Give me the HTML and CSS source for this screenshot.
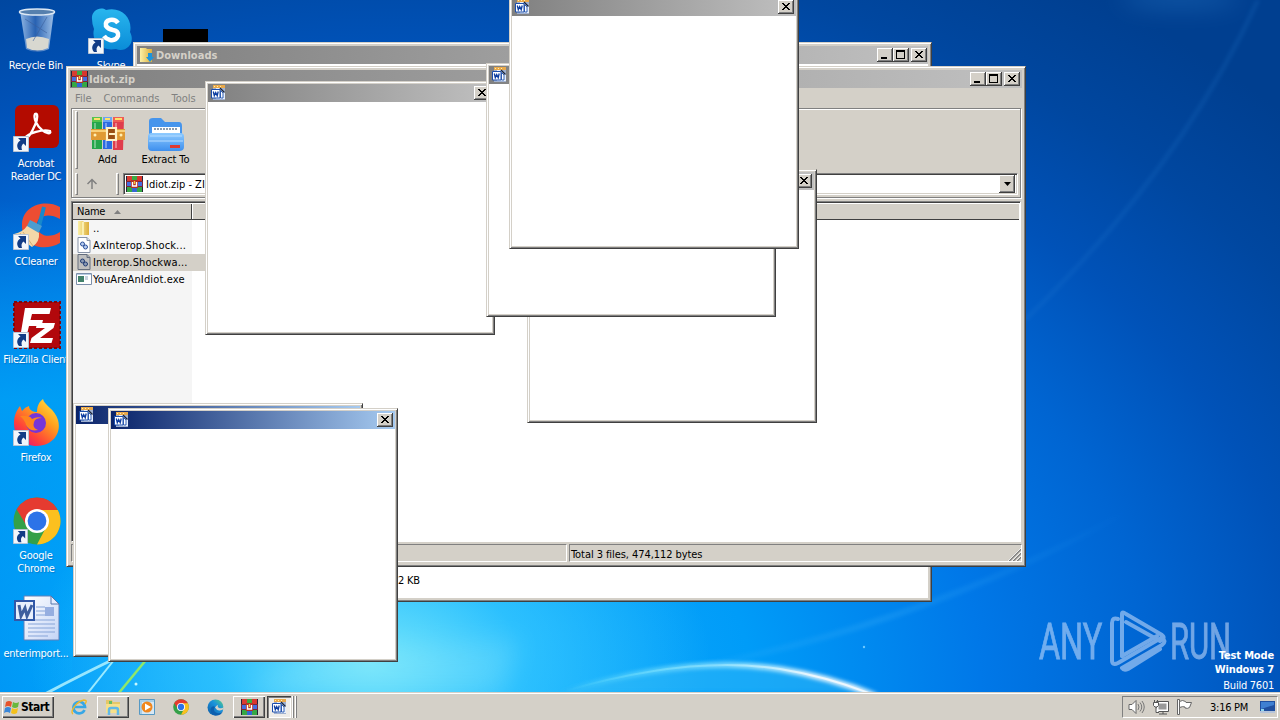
FILE: index.html
```html
<!DOCTYPE html>
<html lang="en">
<head>
<meta charset="utf-8">
<title>Desktop</title>
<link rel="stylesheet" href="styles.css">
</head>
<body>
<svg class="defs" width="0" height="0" aria-hidden="true">
  <defs>
    <linearGradient id="gFolder" x1="0" y1="0" x2="0" y2="1"><stop offset="0" stop-color="#8fcbff"/><stop offset="1" stop-color="#3d8fee"/></linearGradient>
    <linearGradient id="gYellow" x1="0" y1="0" x2="1" y2="0"><stop offset="0" stop-color="#fbf0a6"/><stop offset="1" stop-color="#dcae3c"/></linearGradient>
    <linearGradient id="gFox" x1="1" y1="0" x2="0.2" y2="1"><stop offset="0" stop-color="#fff04a"/><stop offset=".4" stop-color="#ffa11e"/><stop offset=".75" stop-color="#ff4438"/><stop offset="1" stop-color="#e2127c"/></linearGradient>
    <linearGradient id="gEdge" x1="0" y1="1" x2="1" y2="0"><stop offset="0" stop-color="#0c59a4"/><stop offset=".6" stop-color="#1b93dc"/><stop offset="1" stop-color="#5ad27a"/></linearGradient>
    <linearGradient id="gBin" x1="0" y1="0" x2="1" y2="0"><stop offset="0" stop-color="#a9c9ee"/><stop offset=".45" stop-color="#2f66b4"/><stop offset="1" stop-color="#b9d4f2"/></linearGradient>
    <linearGradient id="gSky" x1="0" y1="0" x2="0" y2="1"><stop offset="0" stop-color="#29b6ee"/><stop offset="1" stop-color="#0a8cd8"/></linearGradient>
    <linearGradient id="gDoc" x1="0" y1="0" x2="1" y2="1"><stop offset="0" stop-color="#fff"/><stop offset="1" stop-color="#c4d4f6"/></linearGradient>
    <symbol id="x" viewBox="0 0 16 14"><path d="M4 3h2v1h1v1h2V4h1V3h2v1h-1v1h-1v1H9v1h1v1h1v1h1v1h-2V9H9V8H7v1H6v1H4V9h1V8h1V7h1V6H6V5H5V4H4z"/></symbol>
    <symbol id="max" viewBox="0 0 16 14"><path fill-rule="evenodd" d="M3 2h9v9H3zM4 4v6h7V4z"/></symbol>
    <symbol id="min" viewBox="0 0 16 14"><path d="M4 9h6v2H4z"/></symbol>
    <symbol id="word" viewBox="0 0 16 16">
      <path d="M3 0h12v15H3z" fill="#9fb0cf"/><path d="M3 0h12v3H3z" fill="#e9a94a"/><path d="M4 1h1v1H4zM7 1h1v1H7zM10 1h1v1h-1z" fill="#fff0b0"/>
      <path d="M6 3h5l4 4v7H6z" fill="#e5eefc"/><path d="M10 3l4.500 4.500" stroke="#14233f" stroke-width="1.500"/>
      <path d="M1.500 4.500h8.500v8.500H1.500z" fill="#fff" stroke="#1c4eab"/><path d="M3.300 6.500l1 4.200L5.700 7.500 7.200 10.700l1-4.200" fill="none" stroke="#0b3ca0" stroke-width="1.300"/><path d="M10.500 5.500v7.500h2.500V8z" fill="#fff" stroke="#1c4eab" stroke-width=".9"/>
    </symbol>
    <symbol id="rar" viewBox="0 0 17 16">
      <path d="M0 0h17v16H0z" fill="#252538"/><path d="M1 0h5v5H1z" fill="#d83c32"/><path d="M6 0h5v5H6z" fill="#3aab43"/><path d="M11 0h5v5h-5z" fill="#d9362e"/>
      <path d="M1 11h5v5H1z" fill="#36a845"/><path d="M6 11h5v5H6z" fill="#3567d2"/><path d="M11 11h5v5h-5z" fill="#36a845"/>
      <path d="M0 5h17v6H0z" fill="#7c2736"/><path d="M1 6h4v4H1zM12 6h4v4h-4z" fill="#456de0"/><path d="M5 4h7v8H5z" fill="#b73124"/><path d="M6.500 6v4h4V6" fill="none" stroke="#fff" stroke-width="1.400"/><path d="M8.500 5v3" stroke="#f9cc3c" stroke-width="1.300"/>
    </symbol>
    <symbol id="cut" viewBox="0 0 16 16"><path d="M.5.5h15v15H.5z" fill="#f2f6fb" stroke="#b9c4d4"/><path d="M5 2h8v8l-2.500-2.500C8.500 9 8 11 9 14H6C3 10.500 4 6.500 7.500 4.500z" fill="#123c86"/></symbol>
    <symbol id="chrome" viewBox="0 0 48 48">
      <circle cx="24" cy="24" r="23.500" fill="#34a048"/><path d="M24 24L3.600 12.300A23.500 23.500 0 0 1 44.400 12.300z" fill="#e53b30"/><path d="M24 13h20.800A23.500 23.500 0 0 1 24 47.500l9.500-18z" fill="#fbc01f"/><path d="M3.600 12.300L14 29.500 24 24V12z" fill="#e53b30"/>
      <circle cx="24" cy="24" r="12" fill="#fff"/><circle cx="24" cy="24" r="9.400" fill="#2c73e8"/>
    </symbol>
    <symbol id="dll" viewBox="0 0 15 16"><path d="M1.500.5h9l3 3v12h-12z" fill="#fff" stroke="#8793a7"/><path d="M10.500.5v3h3" fill="#dbe3ee" stroke="#8793a7"/><circle cx="6" cy="7" r="2" fill="#b8cdf0" stroke="#2b4f99"/><circle cx="9" cy="10" r="2" fill="#b8cdf0" stroke="#2b4f99"/></symbol>
    <symbol id="resize" viewBox="0 0 13 13"><path d="M1 13L13 1M5 13l8-8M9 13l4-4" stroke="#808080" stroke-width="1.700"/><path d="M0 13L13 0M4 13l9-9M8 13l5-5" stroke="#fff" stroke-width=".8"/></symbol>
  </defs>
</svg>

<main class="desktop">
  <svg class="wallpaper" width="1280" height="692" viewBox="0 0 1280 692">
    <defs>
      <filter id="soft" x="-10%" y="-30%" width="120%" height="160%"><feGaussianBlur stdDeviation="2"/></filter>
      <filter id="wide" x="-50%" y="-200%" width="200%" height="500%"><feGaussianBlur stdDeviation="12"/></filter>
      <linearGradient id="arc" gradientUnits="userSpaceOnUse" x1="565" y1="0" x2="876" y2="0"><stop offset="0" stop-color="#9ff" stop-opacity="0"/><stop offset=".5" stop-color="#a6ecff" stop-opacity=".8"/><stop offset=".8" stop-color="#fff"/><stop offset="1" stop-color="#fff"/></linearGradient>
      <linearGradient id="ray" gradientUnits="userSpaceOnUse" x1="620" y1="0" x2="1130" y2="0"><stop offset="0" stop-color="#4dbcff" stop-opacity="0"/><stop offset=".5" stop-color="#3aaef8"/><stop offset="1" stop-color="#3aaef8" stop-opacity="0"/></linearGradient>
    </defs>
    <path d="M560 692Q690 650 780 668Q840 678 875 692z" fill="#39bdf8" opacity=".45" filter="url(#soft)"/>
    <path d="M565 691Q690 655 780 669Q830 677 876 696" fill="none" stroke="url(#arc)" stroke-width="5" filter="url(#soft)"/>
    <path d="M565 691Q690 655 780 669Q830 677 876 696" fill="none" stroke="url(#arc)" stroke-width="2" opacity=".7"/>
    <path d="M620 680Q900 640 1130 510" fill="none" stroke="url(#ray)" stroke-width="6" opacity=".3" filter="url(#soft)"/>
    <ellipse cx="1180" cy="-2" rx="60" ry="10" fill="#48a0e8" opacity=".25" filter="url(#wide)"/>
    <path d="M1258 0Q1180 170 1025 320" fill="none" stroke="#2c83d6" stroke-width="3" opacity=".25" filter="url(#soft)"/>
    <path d="M45 694Q75 678 112 660" fill="none" stroke="#bcf6ff" stroke-width="3" opacity=".8"/><path d="M87 694l27-34" stroke="#9aeaff" stroke-width="2"/><path d="M118 694l28-34" stroke="#8fe86a" stroke-width="2.500"/>
    <path d="M245 694Q275 664 330 650L520 640 500 694z" fill="#a8f0fb" opacity=".2" filter="url(#wide)"/><circle cx="136" cy="684" r="1.500" fill="#c7f8ff"/><circle cx="864" cy="647" r="1.200" fill="#6cc8ff"/>
  </svg>

  <div class="icons">
    <div class="shortcut"><svg width="48" height="48"><path d="M7 4h34l-5 38q-12 6-23 0z" fill="url(#gBin)" opacity=".85"/><path d="M13 32q11-5 23 0l-1 9q-11 5-21 0z" fill="#d8d8d0"/><path d="M12 12l22 14M34 10L20 34" stroke="#3b5f9b" opacity=".6"/><ellipse cx="24" cy="5" rx="17.500" ry="3" fill="#5680ae" stroke="#dce8f4" stroke-width="1.500"/></svg><span>Recycle Bin</span></div>
    <div class="shortcut"><svg width="48" height="48"><rect x="2" y="0" width="44" height="43" rx="6" fill="#b30b00"/><path d="M12 33C15 28 30 24 37 26C39 30 32 28 29 25C24 21 20 13 22 9C25 7 25 14 22 20C19 27 16 33 12 34z" fill="none" stroke="#fff" stroke-width="2.300"/><use href="#cut" y="31" width="16" height="16"/></svg><span>Acrobat<br>Reader DC</span></div>
    <div class="shortcut"><svg width="48" height="48"><path d="M47 4C32-4 10 2 9 21C8 42 29 50 47 40V29C36 36 25 33 24 23C23 13 35 9 47 16z" fill="#ec4d32"/><path d="M31 4l-5 19" stroke="#1688cc" stroke-width="4"/><path d="M17 17l12 6-4 8-12-6z" fill="#4a9dd0"/><path d="M14 23l12 7q1 9-7 14L1 31q9-2 13-8z" fill="#f4d8a8"/><path d="M10 29l10 14M7 30l8 10" stroke="#d4ae74"/><use href="#cut" y="31" width="16" height="16"/></svg><span>CCleaner</span></div>
    <div class="shortcut"><svg width="48" height="48"><rect x="1" y="1" width="46" height="46" fill="#b2080c" stroke="#80050a" stroke-width="2" stroke-dasharray="3 2"/><path d="M12 7h26l-1.500 6H19l-1.500 6H30l-1.500 6H16l-3 12H7z" fill="#fff"/><path d="M24 22h18l-1.500 5L27 37h13l-1.500 5H17l1.500-5L32 27H23z" fill="#fff"/><use href="#cut" y="31" width="16" height="16"/></svg><span>FileZilla Client</span></div>
    <div class="shortcut"><svg width="48" height="48"><path d="M30 0c1 6 12 10 15 21 4 15-7 26-21 26S1 38 1 24c0-8 3-13 6-17l2 5q3-4 7-5c0 4 4 6 8 6 0-6 2-10 6-13z" fill="url(#gFox)"/><circle cx="23" cy="24" r="10" fill="#7635d8"/><path d="M7 17q10-1 12 3 5-3 10-1-7 0-8 4-2 6 4 8-9 2-12-5-1-5-6-9z" fill="#ff841f"/><use href="#cut" y="31" width="16" height="16"/></svg><span>Firefox</span></div>
    <div class="shortcut"><svg width="48" height="48"><use href="#chrome" width="48" height="48"/><use href="#cut" y="32" width="15" height="15"/></svg><span>Google<br>Chrome</span></div>
    <div class="shortcut"><svg width="48" height="48"><path d="M11 1h27l8 8v36H11z" fill="url(#gDoc)" stroke="#6180b9"/><path d="M38 1v8h8z" fill="#e5edff" stroke="#5976aa"/><path d="M23 12h9M23 16h9M23 20h9M15 25h27M15 29h27M15 33h27M15 37h27M15 41h20" stroke="#86a4d8"/><rect x="32" y="12" width="9" height="9" fill="#96aee0"/><rect x="2" y="6" width="19" height="19" fill="#e8effc" stroke="#3158a8" stroke-width="2"/><path d="M6 10l2 11 4-8 2 8 5-11" fill="none" stroke="#3e5e9e" stroke-width="3"/></svg><span>enterimport...</span></div>
  </div>
  <div class="icons second">
    <div class="shortcut"><svg width="48" height="48"><path d="M4 12C3 4 12-1 18 3C34-1 45 12 42 25C48 36 38 46 28 42C12 45 3 33 6 22Q4 17 4 12z" fill="url(#gSky)"/><path d="M30 16Q27 12 22 13Q17 14 18 19Q20 22 25 23Q31 24 30 29Q28 34 22 33Q18 32 16 29" fill="none" stroke="#fff" stroke-width="4.500"/><use href="#cut" y="31" width="16" height="16"/></svg><span>Skype</span></div>
  </div>
  <div class="thumb"></div>

  <div class="logo"><svg width="200" height="62" viewBox="0 0 200 62"><g fill="#d8e7ff" stroke="#d8e7ff" stroke-width=".8" font-family="Roboto, sans-serif" font-size="50"><text x="1" y="49" textLength="63" lengthAdjust="spacingAndGlyphs">ANY</text><text x="132" y="49" textLength="61" lengthAdjust="spacingAndGlyphs">RUN</text></g><g fill="none" stroke="#d8e7ff" stroke-width="4" stroke-linejoin="round" stroke-linecap="round"><path d="M80 9q-6-2-6 4v37q0 6 6 3l43-25M84 46V4q0-3 4 0l36 21q4 3-2 6L88 12"/><path d="M84 46l35-20M84 58l40-23q5-4 0-6M84 58q2 3 6 1l32-20"/></g></svg></div>
  <div class="build"><b>Test Mode</b><b>Windows 7</b><span>Build 7601</span></div>

  <section class="win frame downloads">
    <header class="title">
      <svg width="16" height="16"><path d="M1 1h6l1 1h5v13H1z" fill="url(#gYellow)"/><path d="M9 6h4v4h2l-4 5-4-5h2z" fill="#1c94dc"/></svg><span class="name">Downloads</span>
      <span class="buttons"><i class="btn"><svg><use href="#min"/></svg></i><i class="btn"><svg><use href="#max"/></svg></i><i class="btn close"><svg><use href="#x"/></svg></i></span>
    </header>
    <div class="downloads-body"><span>2 KB</span></div>
  </section>

  <section class="win frame archive">
    <header class="title">
      <svg width="17" height="16"><use href="#rar"/></svg><span class="name">Idiot.zip</span>
      <span class="buttons"><i class="btn"><svg><use href="#min"/></svg></i><i class="btn"><svg><use href="#max"/></svg></i><i class="btn close"><svg><use href="#x"/></svg></i></span>
    </header>
    <nav class="menu"><span>File</span><span>Commands</span><span>Tools</span></nav>
    <div class="rebar">
      <div class="tools"><i class="grip"></i>
        <div class="tool"><svg width="36" height="36"><g><path d="M2 3h10v30H2z" fill="#25a64c"/><path d="M13 3h9v30h-9z" fill="#2c6be2"/><path d="M23 3h11l-1 31H23z" fill="#e03c4c"/><path d="M2 1h10v5H2z" fill="#56c34e"/><path d="M13 1h9v5h-9z" fill="#6aa4f4"/><path d="M23 1h11v5H23z" fill="#f05d55"/><path d="M4 3h6M15 3h5M25 3h7" stroke="#ffe06a" stroke-width="2"/><path d="M5 7v25M16 7v25M26 7v25" stroke="#fff" opacity=".35" stroke-width="2"/></g><path d="M1 13h34v11H1z" fill="#e09a34"/><path d="M1 15h34" stroke="#f8cf78" stroke-width="2"/><path d="M17 12h9v12h-9zM26 18h-7" fill="#9a4f13" stroke="#fff2c6" stroke-width="2.200"/><circle cx="5" cy="19" r="1.500" fill="#fff0b4"/><circle cx="31" cy="19" r="1.500" fill="#fff0b4"/></svg><span>Add</span></div>
        <div class="tool wide"><svg width="38" height="36"><path d="M2 5q0-3 4-3h8l4 4h14q3 0 3 4v18H2z" fill="#4795ec"/><path d="M5 11h28v14H5z" fill="#fff"/><path d="M7 13h24" stroke="#8d9cad" stroke-width="2" stroke-dasharray="2 1"/><path d="M1 20q0-3 4-3h28q4 0 4 3v11q0 4-5 4H5q-4 0-4-4z" fill="url(#gFolder)"/><path d="M3 20h32M2 25h34" stroke="#b6dcff"/><path d="M23 29h10v3H23z" fill="#df3930"/></svg><span>Extract To</span></div>
      </div>
      <div class="address"><i class="grip"></i><svg class="up" width="12" height="12"><path d="M6 11V2M1.500 6L6 1.500 10.500 6" fill="none" stroke="#808080" stroke-width="1.500"/></svg><i class="grip"></i>
        <div class="combo"><svg width="17" height="16"><use href="#rar"/></svg><span>Idiot.zip - ZIP archive</span><i class="drop"><svg width="7" height="4"><path d="M0 0h7L3.500 4z"/></svg></i></div></div>
    </div>
    <div class="list">
      <div class="head"><span>Name</span><svg width="7" height="4"><path d="M0 4h7L3.500 0z" fill="#808080"/></svg></div>
      <div class="rows">
        <div class="row"><svg width="16" height="16"><path d="M2 1h5l1 1h5v13H2z" fill="url(#gYellow)"/><path d="M7 2v13" stroke="#fff8c6" stroke-width="1.500"/></svg><span>..</span></div>
        <div class="row"><svg width="16" height="16"><use href="#dll"/></svg><span>AxInterop.Shock...</span></div>
        <div class="row selected"><svg class="dim" width="16" height="16"><use href="#dll"/></svg><span>Interop.Shockwa...</span></div>
        <div class="row"><svg width="16" height="16"><path d="M.5 2.500h15v11H.5z" fill="#fff" stroke="#7c8faa"/><path d="M1 3h14v1H1z" fill="#b7cde3"/><path d="M2 5h6v6H2z" fill="#43826b"/><path d="M9 6h3M9 8h3" stroke="#91a7bd"/></svg><span>YouAreAnIdiot.exe</span></div>
      </div>
    </div>
    <footer class="status"><span></span><span>Total 3 files, 474,112 bytes</span><svg class="grab" width="13" height="13"><use href="#resize"/></svg></footer>
  </section>

  <section class="win popup p1"><header class="title"><svg width="16" height="16"><use href="#word"/></svg><i class="btn close"><svg><use href="#x"/></svg></i></header><div class="blank"></div></section>
  <section class="win popup p2"><header class="title"><svg width="16" height="16"><use href="#word"/></svg><i class="btn close"><svg><use href="#x"/></svg></i></header><div class="blank"></div></section>
  <section class="win popup p3"><header class="title"><svg width="16" height="16"><use href="#word"/></svg><i class="btn close"><svg><use href="#x"/></svg></i></header><div class="blank"></div></section>
  <section class="win popup p4"><header class="title"><svg width="16" height="16"><use href="#word"/></svg><i class="btn close"><svg><use href="#x"/></svg></i></header><div class="blank"></div></section>
  <section class="win popup active p5"><header class="title"><svg width="16" height="16"><use href="#word"/></svg><i class="btn close"><svg><use href="#x"/></svg></i></header><div class="blank"></div></section>
  <section class="win popup active p6"><header class="title"><svg width="16" height="16"><use href="#word"/></svg><i class="btn close"><svg><use href="#x"/></svg></i></header><div class="blank"></div></section>
</main>

<footer class="taskbar">
  <div class="start"><svg width="16" height="16"><path d="M2 3q3-2 6 0L7 8Q4 6 1 8z" fill="#e6532a"/><path d="M9 3q3 2 6 0l-1 5q-3 2-6 0z" fill="#69b83c"/><path d="M1 9q3-2 6 0l-1 5q-3-2-6 0z" fill="#3a87d8"/><path d="M8 9q3 2 6 0l-1 5q-3 2-6 0z" fill="#f4c11c"/></svg><b>Start</b></div>
  <div class="launch">
    <i class="slot"><svg width="18" height="18"><path d="M14.500 12A5.800 5.800 0 1 1 15 9H5" fill="none" stroke="#37a7e6" stroke-width="2.700"/><path d="M3 16C-1 14 7 3 14 2q4 0 1 4" fill="none" stroke="#efb928" stroke-width="1.400"/></svg></i>
    <i class="slot raised"><svg width="18" height="18"><path d="M2 2h6l1 2h7v11H2z" fill="#e5c768"/><path d="M5 3h3v3H5z" fill="#65bf65"/><path d="M2 6h14v9H2z" fill="#f7e08a"/><path d="M5 17v-5q0-2 2-2h5q2 0 2 2v5" fill="none" stroke="#62b9e6" stroke-width="2.500"/></svg></i>
    <i class="slot"><svg width="16" height="16"><path d="M.5.5h15v15H.5z" fill="#a9cfe8" stroke="#5699c4"/><path d="M3 3h12v12H3z" fill="#d8e8f4"/><circle cx="8" cy="8" r="5.500" fill="#f0871e"/><path d="M6 4.500v7L12 8z" fill="#fff"/></svg></i>
    <i class="slot"><svg width="16" height="16"><use href="#chrome" width="16" height="16"/></svg></i>
    <i class="slot"><svg width="17" height="17" viewBox="0 0 17 17"><circle cx="8.500" cy="8.500" r="8" fill="url(#gEdge)"/><path d="M8 8q-3 4 2 6 4 1 6-2-2 5-8 4.500Q3 15 3.500 10 5 6 8 8z" fill="#0d5fae"/><path d="M8 8.500q2 3.500 5 3t4-2.500v-1q-2 2-5 1-2-1-1-3-1.500 0-3 2.500z" fill="#d4d0c8"/></svg></i>
    <i class="slot raised"><svg width="17" height="16"><use href="#rar"/></svg></i>
  </div>
  <i class="pressed"><svg width="16" height="16"><use href="#word"/></svg></i><i class="sliver"></i><i class="sliver"></i>
  <div class="tray">
    <svg width="17" height="16"><path d="M1 5.500h3l4-4v13l-4-4H1z" fill="#fff" stroke="#666"/><path d="M10 5q2 3 0 6M12 3.500q3.500 4.500 0 9M14 2q4.500 6 0 12" fill="none" stroke="#777"/></svg>
    <svg width="17" height="16"><path d="M5.500 3.500h10v8h-10z" fill="#999" stroke="#fff" stroke-width="2"/><path d="M4.500 2.500h12v10h-12zM7 15h8M11 12v3" fill="none" stroke="#555"/><path d="M1.500 3.500h5v3l-1.500 1.500H3L1.500 6.500zM2.500 1v2M5.500 1v2M4 8v5.500h3" fill="#fff" stroke="#555"/></svg>
    <svg width="17" height="16"><path d="M1.500.5h2v15h-2z" fill="#fff" stroke="#666"/><path d="M3.500 2.500q3-2 6 0l.5 1h5.500l-2 5q-2 1.500-4.500.5V8q-2-1-5.500.5z" fill="#fff" stroke="#666"/></svg>
    <span>3:16 PM</span>
    <svg width="15" height="12"><path d="M0 0h15v10H0z" fill="#204f9f"/><path d="M1 1h13v3L1 8z" fill="#3f80d2"/><path d="M0 10h15v2H0z" fill="#b5c4da"/><path d="M1 8h3v2H1z" fill="#8fd7ee"/></svg>
  </div>
</footer>
</body>
</html>
```

FILE: styles.css
```css
* { box-sizing: border-box; }
body { margin: 0; width: 1280px; height: 720px; overflow: hidden; display: flex; flex-direction: column; font: 11px/13px "DejaVu Sans Condensed", "DejaVu Sans", sans-serif; letter-spacing: -0.25px; color: #000; }
svg { display: block; flex: none; }
i { font-style: normal; }
.defs { position: absolute; }
.desktop { position: relative; height: 692px; overflow: hidden;
  background:
    radial-gradient(ellipse 340px 210px at 370px 660px, rgba(125, 235, 250, .9), rgba(60, 205, 255, .65) 45%, transparent),
    linear-gradient(180deg, transparent 200px, rgba(0, 168, 248, .75) 400px, rgba(0, 165, 250, .2)) 0 0 / 72px 692px no-repeat,
    radial-gradient(ellipse 1000px 700px at 400px 680px, #18b0ff, #009cf8 35%, #0078e8 58%, #0065d2 75%, #0052b8 90%, #0047a0 105%, #003f90 120%); }
.wallpaper { position: absolute; inset: 0; }

.icons { position: absolute; left: 0; top: 8px; width: 72px; display: flex; flex-direction: column; }
.icons.second { left: 75px; top: 8px; }
.shortcut { height: 98px; display: flex; flex-direction: column; align-items: center; gap: 3px; color: #fff; text-align: center; white-space: nowrap; text-shadow: 1px 1px 1px rgba(0, 20, 80, .25); }
.shortcut svg { margin: -1px 0 1px 2px; }
.thumb { position: absolute; left: 163px; top: 29px; width: 45px; height: 30px; background: #000; }

.logo { position: absolute; left: 1038px; top: 610px; opacity: .52; }
.build { position: absolute; right: 6px; top: 649px; display: flex; flex-direction: column; align-items: flex-end; gap: 1px; color: #fff; }
.build b { letter-spacing: -.15px; }
.build span { margin-top: 2px; }

.win { position: absolute; display: flex; flex-direction: column; background: #d4d0c8; border: 1px solid; border-color: #d4d0c8 #404040 #404040 #d4d0c8; box-shadow: inset 1px 1px #fff, inset -1px -1px #808080; padding: 2px; }
.frame { padding: 3px; }
.title { flex: none; height: 18px; display: flex; align-items: center; padding: 0 2px; background: linear-gradient(90deg, #808080, #c0c0c0); }
.name { margin-left: 1px; font-weight: bold; color: #d4d0c8; letter-spacing: .05px; }
.buttons { margin-left: auto; display: flex; }
.btn { width: 16px; height: 14px; background: #d4d0c8; box-shadow: inset -1px -1px #404040, inset 1px 1px #fff, inset -2px -2px #808080; }
.btn svg { width: 16px; height: 14px; }
.close { margin-left: 2px; }
.popup .close { margin-left: auto; }

.downloads { left: 133px; top: 42px; width: 799px; height: 560px; }
.downloads .title { padding-right: 1px; }
.downloads-body { flex: 1; background: #fff; padding: 510px 0 0 261px; }

.archive { left: 66px; top: 66px; width: 960px; height: 501px; }
.archive .title { padding-left: 1px; }
.menu { height: 20px; display: flex; align-items: center; gap: 12px; padding: 1px 0 0 5px; color: #808080; letter-spacing: 0; }
.rebar { height: 90px; margin: 0 1px; border: 1px solid #808080; box-shadow: inset 1px 1px #fff, 1px 1px #fff; padding: 2px 1px 0 3px; }
.tools { height: 60px; display: flex; align-items: flex-start; }
.grip { flex: none; width: 3px; height: 58px; border: 1px solid; border-color: #fff #808080 #808080 #fff; }
.tool { width: 58px; display: flex; flex-direction: column; align-items: center; gap: 1px; padding: 5px 0 0 1px; letter-spacing: -.1px; }
.address { height: 24px; display: flex; align-items: center; padding-top: 2px; }
.address .grip { height: 22px; }
.up { margin: 0 18px 0 8px; }
.combo { flex: 1; height: 22px; margin: 0 1px 0 4px; background: #fff; border: 1px solid; border-color: #808080 #fff #fff #808080; box-shadow: inset 1px 1px #404040, inset -1px -1px #d4d0c8; display: flex; align-items: center; gap: 3px; padding: 2px; }
.combo span { padding-top: 2px; letter-spacing: 0; }
.drop { margin-left: auto; width: 16px; height: 18px; background: #d4d0c8; box-shadow: inset -1px -1px #404040, inset 1px 1px #fff, inset -2px -2px #808080; display: flex; align-items: center; justify-content: center; }

.list { margin: 3px 1px 0; height: 343px; border: 1px solid; border-color: #808080 #fff #fff #808080; box-shadow: inset 0 1px #404040, inset 1px 0 #404040; background: linear-gradient(90deg, #f5f5f5 120px, #fff 120px); display: flex; flex-direction: column; padding: 1px 1px 0; }
.head { flex: none; height: 17px; background: linear-gradient(90deg, #d4d0c8 118px, #404040 118px 119px, #fff 119px 120px, #d4d0c8 120px); border-bottom: 1px solid #404040; border-top: 1px solid #fff; display: flex; align-items: center; gap: 9px; padding: 1px 0 0 4px; }
.rows { display: flex; flex-direction: column; width: 330px; }
.row { height: 17px; display: flex; align-items: center; gap: 1px; padding-left: 3px; letter-spacing: .15px; }
.row span { padding-top: 1px; }
.selected { background: #d4d0c8; }
.dim { filter: brightness(.75); }
.status { position: relative; flex: 1; margin-top: 2px; display: flex; gap: 2px; padding: 0 0 1px 1px; letter-spacing: -.07px; }
.status span { border: 1px solid; border-color: #808080 #fff #fff #808080; padding: 3px 1px 0; }
.status span:first-child { width: 496px; }
.status span:nth-child(2) { flex: 1; }
.grab { position: absolute; right: 1px; bottom: 2px; }

.popup { width: 290px; height: 254px; }
.blank { flex: 1; background: #fff; }
.active .title { background: linear-gradient(90deg, #0a246a, #a6caf0); }
.p1 { left: 205px; top: 81px; }
.p2 { left: 527px; top: 169px; }
.p3 { left: 486px; top: 63px; }
.p4 { left: 509px; top: -5px; }
.p5 { left: 73px; top: 403px; }
.p6 { left: 108px; top: 408px; }

.taskbar { height: 28px; background: #d4d0c8; border-top: 1px solid #d4d0c8; box-shadow: inset 0 1px #fff; display: flex; align-items: flex-start; padding: 3px 2px 0; }
.start, .raised { background: #d4d0c8; box-shadow: inset 1px 1px #fff, inset -1px -1px #404040, inset -2px -2px #808080; }
.start { width: 52px; height: 22px; display: flex; align-items: center; gap: 1px; padding-left: 2px; font-size: 12px; letter-spacing: -.5px; }
.launch { display: flex; gap: 2px; margin-left: 9px; }
.slot { width: 32px; height: 22px; display: flex; align-items: center; justify-content: center; }
.pressed { width: 24px; height: 22px; margin-left: 2px; background: #eeece8; box-shadow: inset 1px 1px #404040, inset 2px 2px #808080, inset -1px -1px #fff; display: flex; align-items: center; justify-content: center; }
.sliver { width: 2px; height: 22px; margin-left: 1px; border-left: 1px solid #fff; border-right: 1px solid #808080; }
.tray { margin-left: auto; width: 156px; height: 22px; border: 1px solid; border-color: #808080 #fff #fff #808080; display: flex; align-items: center; padding: 0 2px 0 5px; gap: 7px; }
.tray span { margin: 0 5px 0 10px; white-space: nowrap; }
```
